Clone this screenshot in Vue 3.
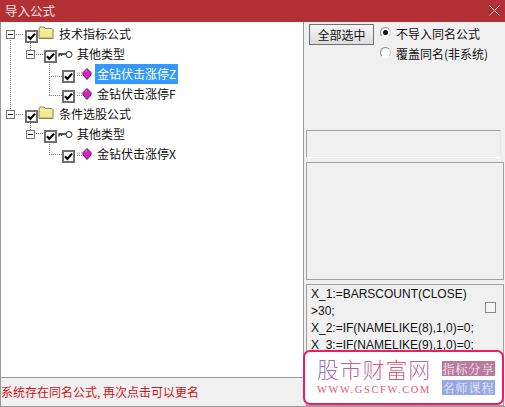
<script setup>
const rows = [
  { label: '技术指标公式', level: 0, icon: 'folder', expander: true },
  { label: '其他类型', level: 1, icon: 'key', expander: true },
  { label: '金钻伏击涨停Z', level: 2, icon: 'gem', selected: true },
  { label: '金钻伏击涨停F', level: 2, icon: 'gem' },
  { label: '条件选股公式', level: 0, icon: 'folder', expander: true },
  { label: '其他类型', level: 1, icon: 'key', expander: true },
  { label: '金钻伏击涨停X', level: 2, icon: 'gem' },
]
</script>

<template>
  <div class="dialog">
    <header class="titlebar">
      <span class="title">导入公式</span>
      <svg class="close" width="11" height="11" viewBox="0 0 11 11"><path d="M0.5 0.5L10.5 10.5M10.5 0.5L0.5 10.5" stroke="#e9c9ca" fill="none" /></svg>
    </header>
    <div class="body">
      <div class="left">
        <div class="tree">
          <svg class="lines" width="120" height="150" viewBox="0 0 120 150">
            <g stroke="#777" stroke-dasharray="1 1" fill="none" shape-rendering="crispEdges">
              <path d="M10.5 18V90M16 12.5H24" />
              <path d="M30.5 21V28M36 32.5H43" />
              <path d="M49.5 40V73.5M49 54.5H62M49 73.5H62" />
              <path d="M16 92.5H24M30.5 101V108M36 111.5H43M49.5 120V132.5M49 132.5H62" />
            </g>
          </svg>
          <div v-for="(row, i) in rows" :key="i" class="row" :class="'lv' + row.level">
            <span class="exp-slot">
              <svg v-if="row.expander" width="9" height="9" viewBox="0 0 9 9"><rect x="0.5" y="0.5" width="8" height="8" fill="#fff" stroke="#777" /><path d="M2 4.5H7" stroke="#222" /></svg>
            </span>
            <svg class="check" width="13" height="13" viewBox="0 0 13 13"><rect x="1" y="1" width="11" height="11" fill="#fff" stroke="#6f6f6f" stroke-width="2" /><path d="M3 6.2L5.4 8.9L10 3.6" fill="none" stroke="#000" stroke-width="2.2" /></svg>
            <svg v-if="row.icon === 'folder'" class="ico-folder" width="16" height="14" viewBox="0 0 16 14"><path d="M1 12.5V2.5L2.2 1H6L7.5 2.5H14L15 3.5V12.5Z" fill="#f1ea8e" stroke="#86845e" /><path d="M2.5 4H14" stroke="#fffbd0" /><path d="M2 11.5H14" stroke="#cfc766" /></svg>
            <svg v-else-if="row.icon === 'key'" class="ico-key" width="15" height="9" viewBox="0 0 15 9"><circle cx="11" cy="4.5" r="3" fill="#fff" stroke="#222" /><path d="M8 4H0.5M1 4V6.5M3.5 4V6" stroke="#222" stroke-width="1.3" fill="none" /></svg>
            <svg v-else class="ico-gem" width="15" height="12" viewBox="0 0 15 12"><path d="M0 5H5M0 7.5H5" stroke="#888" stroke-dasharray="1 1" /><path d="M10 0.5L14 4.5V7L10 11.5L6 7V4.5Z" fill="#d81fc4" stroke="#5f1a68" /><path d="M8.5 3.5L10 2.5" stroke="#f590e8" /></svg>
            <span class="label" :class="{ selected: row.selected }">{{ row.label }}</span>
          </div>
        </div>
        <div class="status">系统存在同名公式, 再次点击可以更名</div>
      </div>
      <div class="right">
        <div class="top-controls">
          <button class="select-all">全部选中</button>
          <div class="radios">
            <div class="radio-row"><span class="radio on"></span>不导入同名公式</div>
            <div class="radio-row"><span class="radio"></span>覆盖同名(非系统)</div>
          </div>
        </div>
        <div class="box small"></div>
        <div class="box mid"></div>
        <div class="box code">
          <div class="code-text">X_1:=BARSCOUNT(CLOSE)<br />&gt;30;<br />X_2:=IF(NAMELIKE(8),1,0)=0;<br />X_3:=IF(NAMELIKE(9),1,0)=0;</div>
          <span class="code-check"></span>
        </div>
      </div>
    </div>
    <div class="mark">
      <div class="mark-brand">
        <div class="mark-name">股市财富网</div>
        <div class="mark-url">WWW.GSCFW.COM</div>
      </div>
      <div class="mark-tags">
        <span class="tag pink">指标分享</span>
        <span class="tag blue">名师课程</span>
      </div>
    </div>
  </div>
</template>

<style>
html, body { margin: 0; padding: 0; background: #f0f0f0; }
</style>

<style scoped>
.dialog {
  position: relative;
  width: 505px;
  height: 407px;
  display: flex;
  flex-direction: column;
  background: #f0f0f0;
  overflow: hidden;
  font-family: "Noto Sans CJK SC", "Liberation Sans", sans-serif;
  font-size: 12px;
  color: #111;
  box-sizing: border-box;
  border-bottom: 1px solid #999;
}
.titlebar {
  height: 22px;
  flex: none;
  background: #b23034;
  color: #f2e4e4;
  display: flex;
  align-items: center;
  justify-content: space-between;
  padding: 0 5px 1px 5px;
  box-sizing: border-box;
  font-size: 12.5px;
}
.body { flex: 1; display: flex; min-height: 0; }
.left {
  width: 304px;
  flex: none;
  display: flex;
  flex-direction: column;
  box-sizing: border-box;
  border-left: 1px solid #999;
}
.tree {
  position: relative;
  height: 356px;
  flex: none;
  background: #fff;
  border-bottom: 1px solid #999;
  border-right: 1px solid #999;
  box-sizing: border-box;
  padding-top: 2px;
}
.lines { position: absolute; left: -1px; top: 0; }
.row {
  position: relative;
  height: 20px;
  display: flex;
  align-items: center;
}
.lv0 { padding-left: 5px; }
.lv1 { padding-left: 25px; }
.lv2 { padding-left: 43px; }
.exp-slot { width: 19px; height: 9px; display: block; flex: none; }
.exp-slot svg { display: block; }
.lv1 .exp-slot { width: 18px; }
.lv2 .exp-slot { width: 18px; }
.check { flex: none; display: block; margin-top: 5px; }
.ico-folder { flex: none; margin-top: -2px; display: block; width: 16px; }
.ico-key { flex: none; margin: 0 0 0 1px; display: block; }
.ico-gem { flex: none; margin-left: 2px; display: block; }
.label { margin-left: 3px; padding: 0 2px; line-height: 20px; white-space: nowrap; }
.lv0 .label { margin-left: 3px; }
.lv1 .label { margin-left: 2px; }
.selected { background: #3399ff; color: #fff; }
.status {
  flex: 1;
  color: #d0121a;
  line-height: 17px;
  padding-top: 5px;
  white-space: nowrap;
}
.right {
  flex: 1;
  padding: 2px 2px 0 2px;
  box-sizing: border-box;
  display: flex;
  flex-direction: column;
}
.top-controls { display: flex; height: 106px; flex: none; }
.select-all {
  margin-left: 3px;
  width: 65px;
  height: 21px;
  border: 1px solid #707070;
  background: linear-gradient(#f6f6f6, #dcdcdc);
  font: inherit;
  color: #111;
  padding: 0;
  flex: none;
}
.radios { margin-left: 6px; margin-top: -1px; }
.radio-row { height: 20px; display: flex; align-items: center; white-space: nowrap; }
.radio {
  position: relative;
  width: 9px;
  height: 9px;
  border-radius: 50%;
  border: 1px solid;
  border-color: #8a8a8a #cfcfcf #fff #8a8a8a;
  background: #fff;
  margin: -1px 5px 0 0;
  flex: none;
}
.radio.on::after {
  content: "";
  position: absolute;
  left: 2px;
  top: 2px;
  width: 5px;
  height: 5px;
  border-radius: 50%;
  background: #111;
}
.box {
  box-sizing: border-box;
  border: 1px solid #a0a0a0;
  border-right-color: #e8e8e8;
  border-bottom-color: #fff;
  background: #f0f0f0;
  flex: none;
}
.small { width: 195px; height: 28px; }
.mid { width: 198px; height: 118px; margin-top: 4px; border-color: #a0a0a0; }
.code { width: 198px; flex: 1; margin-top: 4px; display: flex; border-color: #a0a0a0; padding: 1px 0 0 4px; line-height: 17px; }
.code-text { width: 172px; flex: none; white-space: nowrap; font-family: "Liberation Sans", sans-serif; font-size: 12px; }
.code-check { width: 9px; height: 9px; border: 1px solid #888; background: #f4f4f4; margin: 16px 0 0 2px; flex: none; }
.mark {
  position: absolute;
  left: 303px;
  top: 350px;
  width: 201px;
  height: 55px;
  box-sizing: border-box;
  border: 2px solid #ef1c65;
  border-radius: 7px;
  background: #fff;
  display: flex;
  padding: 4px 7px 0 12px;
}
.mark-brand { flex: 1; }
.mark-name {
  font-family: "Noto Sans CJK SC", sans-serif;
  font-weight: 300;
  font-size: 22px;
  line-height: 24px;
  letter-spacing: 0.8px;
  white-space: nowrap;
  color: #b0609a;
  background: linear-gradient(90deg, #8c6fd0, #e0556f 55%, #b070c0);
  -webkit-background-clip: text;
  background-clip: text;
  -webkit-text-fill-color: transparent;
}
.mark-url {
  font-family: "Liberation Serif", serif;
  font-size: 10.5px;
  line-height: 14px;
  margin-top: 3px;
  letter-spacing: 1.6px;
  color: #e8566f;
  white-space: nowrap;
}
.mark-tags { width: 53px; display: flex; flex-direction: column; gap: 4px; padding-top: 5px; flex: none; }
.tag {
  height: 15px;
  line-height: 15px;
  font-family: "Noto Serif CJK SC", "Noto Sans CJK SC", serif;
  font-size: 12px;
  letter-spacing: 1px;
  text-align: center;
  color: #f4eaf0;
  white-space: nowrap;
}
.pink { background: #b97a9e; }
.blue { background: #93a8e4; }
</style>
